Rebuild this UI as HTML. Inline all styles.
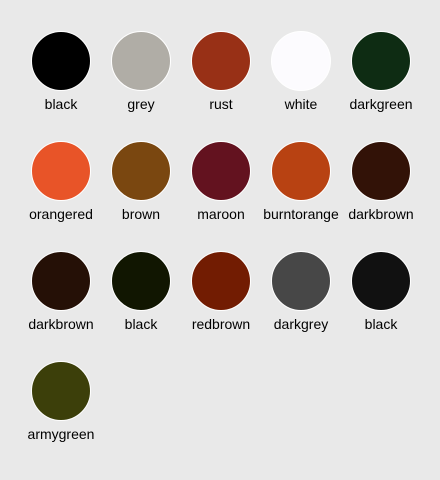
<!DOCTYPE html>
<html><head><style>
body{margin:0;width:440px;height:480px;background:#e9e9e9;font-family:"Liberation Sans",sans-serif;position:relative;overflow:hidden}
.s{position:absolute;width:100px;text-align:center;font-size:14px;color:#000}
.c{width:58px;height:58px;border-radius:50%;border:1px solid #fff;margin:0 auto 5px}
</style></head><body>
<div class="s" style="left:11px;top:31px"><div class="c" style="background:#000"></div>black</div>
<div class="s" style="left:91px;top:31px"><div class="c" style="background:#b0ada6"></div>grey</div>
<div class="s" style="left:171px;top:31px"><div class="c" style="background:#983016"></div>rust</div>
<div class="s" style="left:251px;top:31px"><div class="c" style="background:#fcfbfe"></div>white</div>
<div class="s" style="left:331px;top:31px"><div class="c" style="background:#0e2c13"></div>darkgreen</div>
<div class="s" style="left:11px;top:141px"><div class="c" style="background:#e85428"></div>orangered</div>
<div class="s" style="left:91px;top:141px"><div class="c" style="background:#7a4710"></div>brown</div>
<div class="s" style="left:171px;top:141px"><div class="c" style="background:#63121f"></div>maroon</div>
<div class="s" style="left:251px;top:141px"><div class="c" style="background:#b84212"></div>burntorange</div>
<div class="s" style="left:331px;top:141px"><div class="c" style="background:#321207"></div>darkbrown</div>
<div class="s" style="left:11px;top:251px"><div class="c" style="background:#251006"></div>darkbrown</div>
<div class="s" style="left:91px;top:251px"><div class="c" style="background:#111601"></div>black</div>
<div class="s" style="left:171px;top:251px"><div class="c" style="background:#721c02"></div>redbrown</div>
<div class="s" style="left:251px;top:251px"><div class="c" style="background:#474747"></div>darkgrey</div>
<div class="s" style="left:331px;top:251px"><div class="c" style="background:#111111"></div>black</div>
<div class="s" style="left:11px;top:361px"><div class="c" style="background:#3c3f0a"></div>armygreen</div>
</body></html>
